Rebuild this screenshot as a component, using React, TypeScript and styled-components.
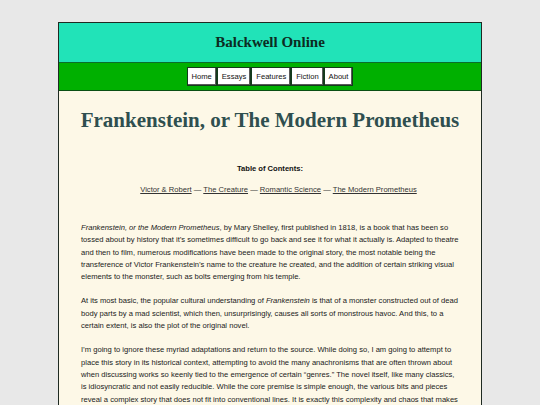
import styled, { createGlobalStyle } from "styled-components";

const GlobalStyle = createGlobalStyle`
  body {
    margin: 0;
    background: #e8e8e8;
    font-family: "Liberation Sans", Arial, sans-serif;
  }
`;

const Page = styled.div`
  width: 422px;
  margin: 22px auto 0;
  border: 1px solid #1e2a22;
  background: #fdf8e7;
`;

const Header = styled.header`
  background: #21e3b8;
  border-bottom: 1px solid #0b6e2a;
  height: 39px;
  display: flex;
  align-items: center;
  justify-content: center;
`;

const SiteTitle = styled.h1`
  margin: 0;
  font-family: "Liberation Serif", "Times New Roman", serif;
  font-size: 15px;
  font-weight: bold;
  color: #0c2b22;
`;

const Nav = styled.nav`
  background: #00b000;
  border-bottom: 1px solid #0a4f14;
  padding: 4px 0;
  display: flex;
  justify-content: center;
`;

const NavButton = styled.a`
  display: block;
  background: #fff;
  border: 1px solid #143a1c;
  box-shadow: inset -1px -1px 0 #5a5a5a;
  padding: 4px 4px;
  font-size: 7.6px;
  line-height: 9px;
  color: #111;
  text-decoration: none;
`;

const Content = styled.main`
  padding: 12px 22px 20px;
`;

const Title = styled.h2`
  margin: 5px -10px 30px;
  text-align: center;
  font-family: "Liberation Serif", "Times New Roman", serif;
  font-size: 21px;
  font-weight: bold;
  color: #2f4f4f;
`;

const TocHeading = styled.p`
  margin: 0 0 9px;
  text-align: center;
  font-size: 7.6px;
  font-weight: bold;
  line-height: 12px;
  color: #111;
`;

const TocLinks = styled.p`
  margin: 0 0 26px;
  padding-left: 17px;
  text-align: center;
  font-size: 7.6px;
  line-height: 12px;
  color: #333;
`;

const TocLink = styled.a`
  color: #333;
  text-decoration: underline;
`;

const Para = styled.p`
  margin: 0 0 12px;
  font-size: 7.6px;
  line-height: 12.3px;
  color: #1a1a1a;
`;

const navItems = ["Home", "Essays", "Features", "Fiction", "About"];
const toc = ["Victor & Robert", "The Creature", "Romantic Science", "The Modern Prometheus"];

export default function App() {
  return (
    <>
      <GlobalStyle />
      <Page>
        <Header>
          <SiteTitle>Balckwell Online</SiteTitle>
        </Header>
        <Nav>
          {navItems.map((n) => (
            <NavButton key={n} href="#">{n}</NavButton>
          ))}
        </Nav>
        <Content>
          <Title>Frankenstein, or The Modern Prometheus</Title>
          <TocHeading>Table of Contents:</TocHeading>
          <TocLinks>
            {toc.map((t, i) => (
              <span key={t}>
                {i > 0 && " — "}
                <TocLink href="#">{t}</TocLink>
              </span>
            ))}
          </TocLinks>
          <Para>
            <em>Frankenstein, or the Modern Prometheus</em>, by Mary Shelley, first published in 1818, is a book that has been so tossed about by history that it’s sometimes difficult to go back and see it for what it actually is. Adapted to theatre and then to film, numerous modifications have been made to the original story, the most notable being the transference of Victor Frankenstein’s name to the creature he created, and the addition of certain striking visual elements to the monster, such as bolts emerging from his temple.
          </Para>
          <Para>
            At its most basic, the popular cultural understanding of <em>Frankenstein</em> is that of a monster constructed out of dead body parts by a mad scientist, which then, unsurprisingly, causes all sorts of monstrous havoc. And this, to a certain extent, is also the plot of the original novel.
          </Para>
          <Para>
            I’m going to ignore these myriad adaptations and return to the source. While doing so, I am going to attempt to place this story in its historical context, attempting to avoid the many anachronisms that are often thrown about when discussing works so keenly tied to the emergence of certain “genres.” The novel itself, like many classics, is idiosyncratic and not easily reducible. While the core premise is simple enough, the various bits and pieces reveal a complex story that does not fit into conventional lines. It is exactly this complexity and chaos that makes the novel so rewarding to read, and so difficult to summarize in a sentence or two.
          </Para>
        </Content>
      </Page>
    </>
  );
}
